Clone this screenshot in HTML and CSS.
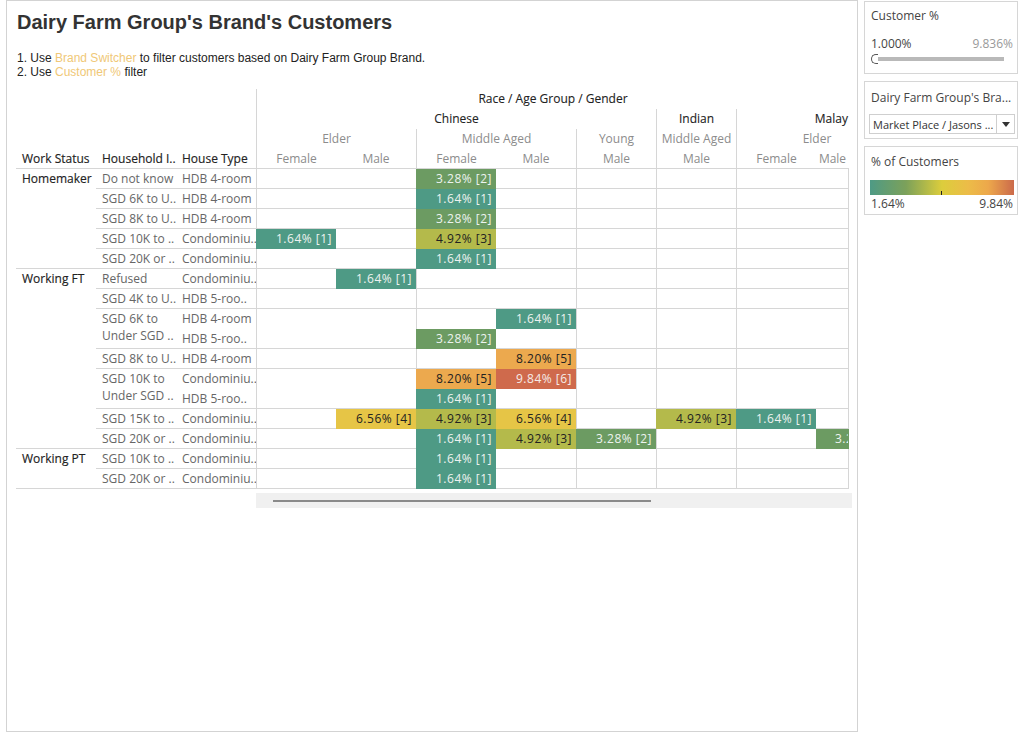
FILE: index.html
```html
<!DOCTYPE html>
<html>
<head>
<meta charset="utf-8">
<link rel="stylesheet" href="styles.css">
</head>
<body>
<div class="main">
  <h1 class="title">Dairy Farm Group's Brand's Customers</h1>
  <div class="notes">
    <div>1. Use <span class="hl">Brand Switcher</span> to filter customers based on Dairy Farm Group Brand.</div>
    <div>2. Use <span class="hl">Customer %</span> filter</div>
  </div>
  <div class="tblwrap">
    <div class="tbl">
      <!-- header row 1 -->
      <div class="s3"></div>
      <div class="s8 bl hd">Race / Age Group / Gender</div>
      <!-- header row 2 -->
      <div class="s3"></div>
      <div class="s5 bl hd">Chinese</div>
      <div class="bl hd">Indian</div>
      <div class="s2 bl hd ralign">Malay</div>
      <!-- header row 3 -->
      <div class="s3"></div>
      <div class="s2 bl dim">Elder</div>
      <div class="s2 bl dim">Middle Aged</div>
      <div class="bl dim">Young</div>
      <div class="bl dim">Middle Aged</div>
      <div class="s2 bl dim padl">Elder</div>
      <!-- header row 4 -->
      <div class="lh bb">Work Status</div>
      <div class="lh bb">Household I..</div>
      <div class="lh bb">House Type</div>
      <div class="bl dim bb">Female</div>
      <div class="dim bb">Male</div>
      <div class="bl dim bb">Female</div>
      <div class="dim bb">Male</div>
      <div class="bl dim bb">Male</div>
      <div class="bl dim bb">Male</div>
      <div class="bl dim bb">Female</div>
      <div class="dim bb">Male</div>

      <!-- r1 -->
      <div class="ws bb r5">Homemaker</div>
      <div class="hh bb">Do not know</div>
      <div class="ht bb">HDB 4-room</div>
      <div class="d bb bl"></div><div class="d bb"></div><div class="d bb bl c3">3.28% [2]</div><div class="d bb"></div><div class="d bb bl"></div><div class="d bb bl"></div><div class="d bb bl"></div><div class="d bb br"></div>
      <!-- r2 -->
      <div class="hh bb">SGD 6K to U..</div>
      <div class="ht bb">HDB 4-room</div>
      <div class="d bb bl"></div><div class="d bb"></div><div class="d bb bl c1">1.64% [1]</div><div class="d bb"></div><div class="d bb bl"></div><div class="d bb bl"></div><div class="d bb bl"></div><div class="d bb br"></div>
      <!-- r3 -->
      <div class="hh bb">SGD 8K to U..</div>
      <div class="ht bb">HDB 4-room</div>
      <div class="d bb bl"></div><div class="d bb"></div><div class="d bb bl c3">3.28% [2]</div><div class="d bb"></div><div class="d bb bl"></div><div class="d bb bl"></div><div class="d bb bl"></div><div class="d bb br"></div>
      <!-- r4 -->
      <div class="hh bb">SGD 10K to ..</div>
      <div class="ht bb">Condominiu..</div>
      <div class="d bb bl c1">1.64% [1]</div><div class="d bb"></div><div class="d bb bl c5">4.92% [3]</div><div class="d bb"></div><div class="d bb bl"></div><div class="d bb bl"></div><div class="d bb bl"></div><div class="d bb br"></div>
      <!-- r5 -->
      <div class="hh bb">SGD 20K or ..</div>
      <div class="ht bb">Condominiu..</div>
      <div class="d bb bl"></div><div class="d bb"></div><div class="d bb bl c1">1.64% [1]</div><div class="d bb"></div><div class="d bb bl"></div><div class="d bb bl"></div><div class="d bb bl"></div><div class="d bb br"></div>

      <!-- r6 -->
      <div class="ws bb r9">Working FT</div>
      <div class="hh bb">Refused</div>
      <div class="ht bb">Condominiu..</div>
      <div class="d bb bl"></div><div class="d bb c1">1.64% [1]</div><div class="d bb bl"></div><div class="d bb"></div><div class="d bb bl"></div><div class="d bb bl"></div><div class="d bb bl"></div><div class="d bb br"></div>
      <!-- r7 -->
      <div class="hh bb">SGD 4K to U..</div>
      <div class="ht bb">HDB 5-roo..</div>
      <div class="d bb bl"></div><div class="d bb"></div><div class="d bb bl"></div><div class="d bb"></div><div class="d bb bl"></div><div class="d bb bl"></div><div class="d bb bl"></div><div class="d bb br"></div>
      <!-- r8 -->
      <div class="hh bb r2 wrap">SGD 6K to<br>Under SGD ..</div>
      <div class="ht">HDB 4-room</div>
      <div class="d bl"></div><div class="d"></div><div class="d bl"></div><div class="d c1">1.64% [1]</div><div class="d bl"></div><div class="d bl"></div><div class="d bl"></div><div class="d br"></div>
      <!-- r9 -->
      <div class="ht bb">HDB 5-roo..</div>
      <div class="d bb bl"></div><div class="d bb"></div><div class="d bb bl c3">3.28% [2]</div><div class="d bb"></div><div class="d bb bl"></div><div class="d bb bl"></div><div class="d bb bl"></div><div class="d bb br"></div>
      <!-- r10 -->
      <div class="hh bb">SGD 8K to U..</div>
      <div class="ht bb">HDB 4-room</div>
      <div class="d bb bl"></div><div class="d bb"></div><div class="d bb bl"></div><div class="d bb c8">8.20% [5]</div><div class="d bb bl"></div><div class="d bb bl"></div><div class="d bb bl"></div><div class="d bb br"></div>
      <!-- r11 -->
      <div class="hh bb r2 wrap">SGD 10K to<br>Under SGD ..</div>
      <div class="ht">Condominiu..</div>
      <div class="d bl"></div><div class="d"></div><div class="d bl c8">8.20% [5]</div><div class="d c9">9.84% [6]</div><div class="d bl"></div><div class="d bl"></div><div class="d bl"></div><div class="d br"></div>
      <!-- r12 -->
      <div class="ht bb">HDB 5-roo..</div>
      <div class="d bb bl"></div><div class="d bb"></div><div class="d bb bl c1">1.64% [1]</div><div class="d bb"></div><div class="d bb bl"></div><div class="d bb bl"></div><div class="d bb bl"></div><div class="d bb br"></div>
      <!-- r13 -->
      <div class="hh bb">SGD 15K to ..</div>
      <div class="ht bb">Condominiu..</div>
      <div class="d bb bl"></div><div class="d bb c6">6.56% [4]</div><div class="d bb bl c5">4.92% [3]</div><div class="d bb c6">6.56% [4]</div><div class="d bb bl"></div><div class="d bb bl c5">4.92% [3]</div><div class="d bb bl c1">1.64% [1]</div><div class="d bb br"></div>
      <!-- r14 -->
      <div class="hh bb">SGD 20K or ..</div>
      <div class="ht bb">Condominiu..</div>
      <div class="d bb bl"></div><div class="d bb"></div><div class="d bb bl c1">1.64% [1]</div><div class="d bb c5">4.92% [3]</div><div class="d bb bl c3">3.28% [2]</div><div class="d bb bl"></div><div class="d bb bl"></div><div class="d bb br c3 clipped">3.28% [2]</div>

      <!-- r15 -->
      <div class="ws bb r2">Working PT</div>
      <div class="hh bb">SGD 10K to ..</div>
      <div class="ht bb">Condominiu..</div>
      <div class="d bb bl"></div><div class="d bb"></div><div class="d bb bl c1">1.64% [1]</div><div class="d bb"></div><div class="d bb bl"></div><div class="d bb bl"></div><div class="d bb bl"></div><div class="d bb br"></div>
      <!-- r16 -->
      <div class="hh bb">SGD 20K or ..</div>
      <div class="ht bb">Condominiu..</div>
      <div class="d bb bl"></div><div class="d bb"></div><div class="d bb bl c1">1.64% [1]</div><div class="d bb"></div><div class="d bb bl"></div><div class="d bb bl"></div><div class="d bb bl"></div><div class="d bb br"></div>
    </div>
  </div>
  <div class="hscroll"><div class="thumb"></div></div>
</div>

<div class="side">
  <div class="card card1">
    <div class="ctitle">Customer %</div>
    <div class="range"><span>1.000%</span><span class="rmax">9.836%</span></div>
    <div class="slider"><div class="knob"></div><div class="track"></div></div>
  </div>
  <div class="card card2">
    <div class="ctitle">Dairy Farm Group's Bra...</div>
    <div class="dropdown">
      <div class="ddtext">Market Place / Jasons ...</div>
      <div class="ddbtn"><svg width="8" height="5" viewBox="0 0 8 5"><path d="M0 0 L8 0 L4 5 Z" fill="#333"/></svg></div>
    </div>
  </div>
  <div class="card card3">
    <div class="ctitle">% of Customers</div>
    <div class="grad"><div class="tick"></div></div>
    <div class="range"><span>1.64%</span><span>9.84%</span></div>
  </div>
</div>
</body>
</html>
```
FILE: styles.css
```css
html, body {
  margin: 0;
  padding: 0;
  background: #ffffff;
}
body {
  display: flex;
  align-items: flex-start;
  gap: 6px;
  padding-left: 6px;
  font-family: "Open Sans", "DejaVu Sans", sans-serif;
  color: #333;
}
.main {
  box-sizing: border-box;
  width: 852px;
  height: 732px;
  border: 1px solid #d3d3d3;
  padding: 9px 0 0 9px;
}
.title {
  margin: 0 0 0 1px;
  font-family: "Liberation Sans", Arial, sans-serif;
  font-weight: bold;
  font-size: 20px;
  line-height: 24px;
  color: #333;
}
.notes {
  margin: 17px 0 0 1px;
  font-family: "Liberation Sans", Arial, sans-serif;
  font-size: 12px;
  line-height: 14px;
  color: #222;
}
.hl { color: #f0c877; }

.tblwrap {
  margin-top: 10px;
  width: 833px;
  overflow: hidden;
}
.tbl {
  display: grid;
  grid-template-columns: repeat(10, 80px) 33px;
  grid-auto-rows: 20px;
  font-size: 12px;
}
.tbl > div {
  box-sizing: border-box;
  line-height: 20px;
  white-space: nowrap;
  overflow: hidden;
}
.s2 { grid-column: span 2; }
.s3 { grid-column: span 3; }
.s5 { grid-column: span 5; }
.s8 { grid-column: span 8; }
.r2 { grid-row: span 2; }
.r5 { grid-row: span 5; }
.r9 { grid-row: span 9; }

.bl { border-left: 1px solid #d6d6d6; }
.bb { border-bottom: 1px solid #d6d6d6; }
.br { border-right: 1px solid #d6d6d6; }

.hd {
  text-align: center;
  color: #222;
  -webkit-text-stroke: 0.1px #222;
}
.ralign { text-align: right; padding-right: 1px; }
.dim {
  text-align: center;
  color: #8c8c8c;
}
.padl { padding-left: 48px; }
.lh, .ws {
  color: #222;
  padding-left: 6px;
  -webkit-text-stroke: 0.15px #222;
}
.hh, .ht {
  color: #666;
  padding-left: 6px;
}
.wrap { line-height: 17px !important; padding-top: 1px; }
.d {
  text-align: right;
  padding-right: 4px;
  letter-spacing: 0.5px;
}
.c1, .c3, .c5, .c6, .c8, .c9 { border-color: transparent !important; }
.c1 { background: #4e9a85; color: #eef3ef; }
.c3 { background: #6c9b62; color: #eef3ef; }
.c5 { background: #b4ba4b; color: #222; }
.c6 { background: #e6c546; color: #222; }
.c8 { background: #eca94e; color: #222; }
.c9 { background: #cf6a4c; color: #f6ece8; }
.clipped { text-align: left; padding-left: 19px; padding-right: 0; }

.hscroll {
  margin: 4px 0 0 240px;
  width: 596px;
  height: 15px;
  background: #f0f0f0;
  display: flex;
  align-items: center;
  padding-left: 17px;
  box-sizing: border-box;
}
.thumb {
  width: 378px;
  height: 2px;
  background: #8a8a8a;
}

.side {
  width: 154px;
  display: flex;
  flex-direction: column;
  gap: 7px;
  margin-top: 1px;
  font-size: 12px;
}
.card {
  box-sizing: border-box;
  border: 1px solid #d6d6d6;
  padding: 6px 4px 0 6px;
}
.card1 { height: 73px; }
.card2 { height: 58px; }
.card3 { height: 69px; }
.ctitle {
  color: #444;
  line-height: 16px;
}
.card1 .range {
  margin-top: 12px;
}
.range {
  display: flex;
  justify-content: space-between;
  color: #444;
  line-height: 16px;
}
.rmax { color: #999; }
.slider {
  display: flex;
  align-items: center;
  height: 11px;
  margin-top: 1px;
}
.knob {
  box-sizing: border-box;
  width: 7px;
  height: 10px;
  border: 1px solid #555;
  border-right: none;
  border-radius: 5px 0 0 5px;
  background: #fff;
}
.track {
  width: 126px;
  height: 4px;
  background: #b9b9b9;
}
.card2 .ctitle { margin-top: 2px; }
.dropdown {
  margin: 8px 0 0 -2px;
  box-sizing: border-box;
  width: 146px;
  height: 20px;
  border: 1px solid #cfcfcf;
  display: flex;
  align-items: center;
  font-size: 11px;
}
.ddtext {
  flex: 1;
  padding-left: 3px;
  color: #333;
  white-space: nowrap;
  overflow: hidden;
}
.ddbtn {
  width: 17px;
  height: 100%;
  border-left: 1px solid #cfcfcf;
  display: flex;
  align-items: center;
  justify-content: center;
}
.card3 .ctitle { margin-top: 1px; }
.grad {
  position: relative;
  margin: 10px 0 0 -1px;
  width: 144px;
  height: 15px;
  background: linear-gradient(to right, #4e9a85 0%, #7ca15a 25%, #dccd3c 50%, #ecbc48 68%, #eda84b 82%, #cb6a4b 100%);
}
.tick {
  position: absolute;
  left: 71px;
  bottom: 0;
  width: 1px;
  height: 4px;
  background: #222;
}
.card3 .range { margin-top: 1px; }
```
